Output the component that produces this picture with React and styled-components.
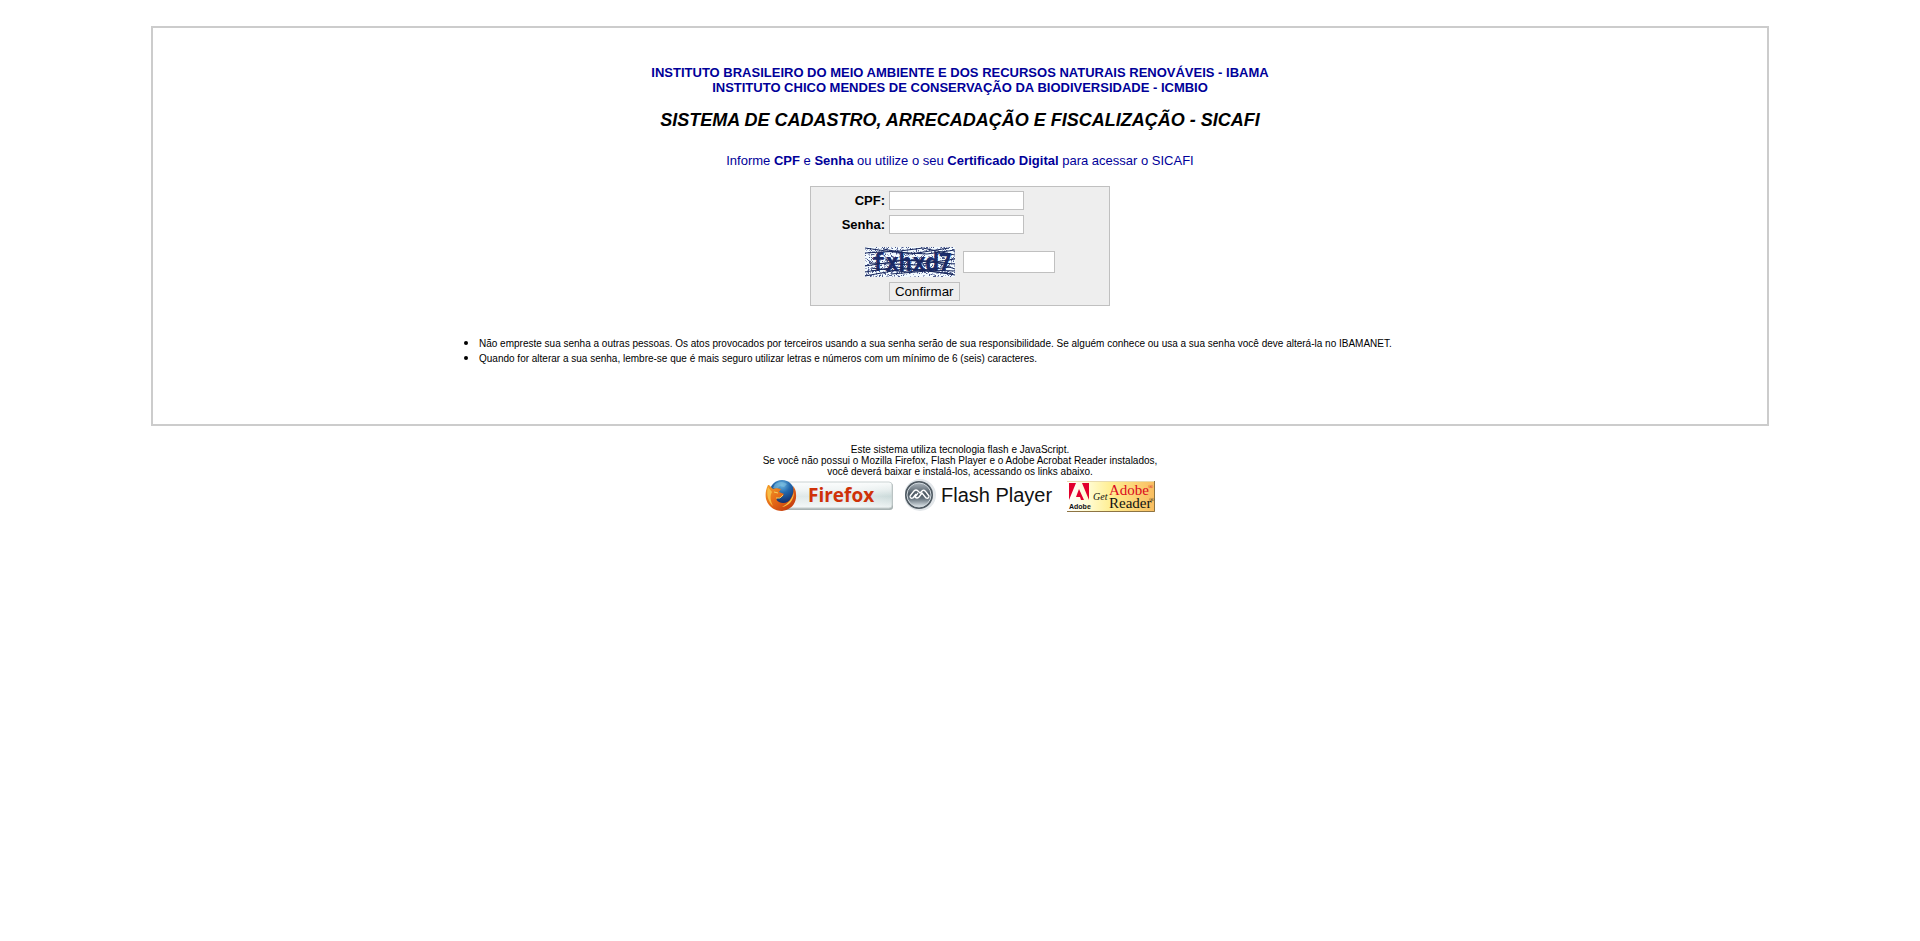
import React from "react";
import styled, { createGlobalStyle } from "styled-components";

const GlobalStyle = createGlobalStyle`
  body {
    margin: 0;
    background: #fff;
    color: #000;
    font-family: "Liberation Sans", Arial, Helvetica, sans-serif;
    font-size: 13px;
    line-height: 15px;
  }
`;

const Page = styled.div`
  padding: 26px 8px;
`;

const Panel = styled.main`
  box-sizing: border-box;
  width: 85%;
  margin: 0 auto;
  padding: 37px 0 59px;
  border: 2px solid #ccc;
  display: flex;
  flex-direction: column;
  align-items: center;
`;

const Agencies = styled.p`
  margin: 0;
  color: #009;
  font-weight: bold;
  text-align: center;
`;

const SystemTitle = styled.h1`
  margin: 15px 0 0;
  font-size: 18px;
  line-height: 20px;
  font-style: italic;
  text-align: center;
`;

const Intro = styled.p`
  margin: 23px 0 18px;
  color: #009;
  text-align: center;
`;

const LoginForm = styled.form`
  box-sizing: border-box;
  width: 300px;
  padding: 4px;
  border: 1px solid #c0c0c0;
  background: #eee;
  display: grid;
  grid-template-columns: 70px 1fr;
  gap: 5px 4px;
  align-items: center;
  justify-items: start;
`;

const FieldLabel = styled.label`
  justify-self: end;
  font-weight: bold;
`;

const TextInput = styled.input`
  box-sizing: border-box;
  width: ${(p) => (p.$code ? 92 : 135)}px;
  height: ${(p) => (p.$code ? 22 : 19)}px;
  padding: 1px 2px;
  border: 1px solid #c0c0c0;
  background: #fff;
  font: inherit;
`;

const CaptchaRow = styled.div`
  grid-column: 1 / -1;
  justify-self: center;
  margin-top: 8px;
  display: flex;
  align-items: center;
  gap: 8px;
`;

const Drawing = styled.svg`
  display: block;
`;

const SubmitButton = styled.button`
  grid-column: 2;
  box-sizing: border-box;
  height: 19px;
  padding: 0 5px;
  border: 1px solid #c0c0c0;
  background: #eee;
  color: #000;
  font-family: inherit;
`;

const Notes = styled.ul`
  box-sizing: border-box;
  width: 1042px;
  max-width: 100%;
  margin: 29px 0 0;
  padding: 0 0 0 40px;
`;

const NoteText = styled.span`
  font-size: 10px;
  line-height: 10px;
`;

const Requirements = styled.footer`
  margin-top: 18px;
  font-size: 10px;
  line-height: 11px;
  text-align: center;
`;

const RequirementsText = styled.p`
  margin: 0;
`;

const Downloads = styled.nav`
  margin-top: 2px;
  display: flex;
  justify-content: center;
  gap: 12px;
`;

const DownloadLink = styled.a`
  display: block;
  color: inherit;
  text-decoration: none;
`;

function specks(seed, count) {
  let s = seed;
  const next = () => {
    s = (s * 1103515245 + 12345) % 2147483648;
    return s / 2147483648;
  };
  let d = "";
  for (let i = 0; i < count; i += 1) {
    d += `M${Math.floor(next() * 90)} ${Math.floor(next() * 30)}h1v1h-1z`;
  }
  return d;
}

const LIGHT_SPECKS = specks(17, 620);
const DARK_SPECKS = specks(91, 420);

function Captcha() {
  return (
    <Drawing width="90" height="30" viewBox="0 0 90 30" role="img" aria-label="Código de segurança">
      <rect width="90" height="30" fill="#f2faff" />
      <g shapeRendering="crispEdges">
        <path d={LIGHT_SPECKS} fill="#a3acca" />
        <path d={DARK_SPECKS} fill="#4d5a8c" />
      </g>
      <text
        x="6 20 33 47 60 73"
        y="24"
        fontFamily="'DejaVu Sans Mono', monospace"
        fontWeight="bold"
        fontSize="24"
        fill="#1c2c6b"
      >
        fxhxd7
      </text>
      <g fill="none" stroke="#17265c" strokeWidth="1">
        <path d="M0 1L28 5L62 7L90 3M0 6L35 4L58 1L90 8M18 2L46 7L84 1" />
        <path d="M0 19L40 13L90 17M4 16L50 18L90 12M20 13L67 14L90 22" />
        <path d="M0 25L31 20L72 25L90 28M6 21L42 25L86 20M0 29L38 22L90 24M26 27L62 24L88 27" />
      </g>
    </Drawing>
  );
}

function FirefoxBadge() {
  return (
    <Drawing width="128" height="33" viewBox="0 -1 128 33" role="img" aria-label="Firefox">
      <defs>
        <linearGradient id="ffBar" x1="0" y1="0" x2="0" y2="1">
          <stop offset="0" stopColor="#fafcfc" />
          <stop offset=".3" stopColor="#e7eeee" />
          <stop offset=".55" stopColor="#cbdada" />
          <stop offset="1" stopColor="#eef3f3" />
        </linearGradient>
        <linearGradient id="ffBarFade">
          <stop offset="0" stopColor="#fff" stopOpacity=".4" />
          <stop offset=".7" stopColor="#fff" stopOpacity=".4" />
          <stop offset="1" stopColor="#fff" stopOpacity="0" />
        </linearGradient>
        <radialGradient id="ffGlobe" cx=".5" cy=".2" r=".8">
          <stop offset="0" stopColor="#6cb8e2" />
          <stop offset=".4" stopColor="#2469ad" />
          <stop offset="1" stopColor="#10225e" />
        </radialGradient>
        <linearGradient id="ffFox" x1="0" y1="0" x2="1" y2="1">
          <stop offset="0" stopColor="#f3a12b" />
          <stop offset=".45" stopColor="#e66a17" />
          <stop offset="1" stopColor="#b92d0b" />
        </linearGradient>
      </defs>
      <rect x="14" y="3" width="114" height="27" rx="3" fill="#a9b3b3" />
      <rect x="14" y="2" width="113" height="26" rx="3" fill="url(#ffBar)" stroke="#cbd3d3" />
      <rect x="15" y="3" width="111" height="24" rx="2" fill="url(#ffBarFade)" />
      <circle cx="17" cy="12.5" r="12.5" fill="url(#ffGlobe)" />
      <path d="M10 4Q16 0 22 4L19 7L15 6L12 9L8 8Z" fill="#7fbfe0" opacity=".6" />
      <path
        d="M3 5C1 9 0 14 1 19C3 26 9 31 17 31C26 30 32 23 31 14C31 11 30 8 28 6C29 11 28 15 26 18C24 23 18 24 14 22C11 21 11 18 13 18L17 17L19 14L14 12L16 9C12 8 10 8 8 9L4 5Z"
        fill="url(#ffFox)"
      />
      <path d="M29 12C29 20 24 26 17 27C24 23 27 19 29 12Z" fill="#f8c246" />
      <path d="M3 7C1 14 3 22 8 26C5 20 5 15 7 12Z" fill="#f8bd45" />
      <path d="M9 12L13 13M11 18L15 18L18 15" fill="none" stroke="#f6d05b" strokeWidth="1" />
      <text
        x="43"
        y="22"
        fontFamily="'Open Sans', sans-serif"
        fontWeight="bold"
        fontSize="19"
        fill="#cf3108"
      >
        Firefox
      </text>
    </Drawing>
  );
}

function FlashBadge() {
  return (
    <Drawing width="150" height="33" viewBox="0 0 150 33" role="img" aria-label="Flash Player">
      <defs>
        <linearGradient id="flBall" x1="0" y1="0" x2="0" y2="1">
          <stop offset="0" stopColor="#a9b3ba" />
          <stop offset=".45" stopColor="#4d5963" />
          <stop offset=".65" stopColor="#66737d" />
          <stop offset="1" stopColor="#dfe7eb" />
        </linearGradient>
      </defs>
      <circle cx="15" cy="16" r="16" fill="#e3e7ea" />
      <circle cx="14" cy="16" r="14" fill="#4f5a62" />
      <circle cx="14" cy="16" r="12" fill="url(#flBall)" stroke="#cfd7dc" strokeWidth="1" />
      <path
        d="M5 17L9 12Q11 10 13 12L15 14L17 12Q19 10 21 13L24 17Q24 20 21 19L17 14L14 18Q12 20 10 18L13 14M5 17Q5 20 8 19L11 15"
        fill="none"
        stroke="#fff"
        strokeWidth="1.3"
        strokeLinejoin="round"
      />
      <text x="36" y="23" fontFamily="'Liberation Sans', Arial, sans-serif" fontSize="20" fill="#111">
        Flash Player
      </text>
    </Drawing>
  );
}

function ReaderBadge() {
  return (
    <Drawing width="88" height="33" viewBox="0 -1 88 33" role="img" aria-label="Get Adobe Reader">
      <defs>
        <linearGradient id="rdBack">
          <stop offset="0" stopColor="#fff" />
          <stop offset=".25" stopColor="#fffbd0" />
          <stop offset=".5" stopColor="#ffee91" />
          <stop offset="1" stopColor="#f9bd60" />
        </linearGradient>
      </defs>
      <rect y="1" width="88" height="31" fill="url(#rdBack)" />
      <path d="M0 31.5H87.5V1" fill="none" stroke="#8d7443" />
      <path d="M0 1.5H87" stroke="#e8dbad" />
      <path d="M2 3H9L2 20ZM15 3H22V20ZM12 9L17 20H14L13 17H9Z" fill="#e2002c" />
      <text
        x="2"
        y="29"
        fontFamily="'Liberation Sans', Arial, sans-serif"
        fontWeight="bold"
        fontSize="7"
        fill="#111"
      >
        Adobe
      </text>
      <g fontFamily="'Liberation Serif', serif">
        <text x="26" y="20" fontStyle="italic" fontSize="10" fill="#111">
          Get
        </text>
        <text x="42" y="15" fontSize="15" fill="#d90b20">
          Adobe
        </text>
        <text x="42" y="28" fontSize="15" fill="#111">
          Reader
        </text>
        <text x="81" y="9" fontSize="7" fill="#d90b20">®</text>
        <text x="82" y="22" fontSize="7" fill="#111">®</text>
      </g>
    </Drawing>
  );
}

export default function App() {
  return (
    <>
      <GlobalStyle />
      <Page>
        <Panel>
          <Agencies>
            INSTITUTO BRASILEIRO DO MEIO AMBIENTE E DOS RECURSOS NATURAIS RENOVÁVEIS - IBAMA
            <br />
            INSTITUTO CHICO MENDES DE CONSERVAÇÃO DA BIODIVERSIDADE - ICMBIO
          </Agencies>
          <SystemTitle>SISTEMA DE CADASTRO, ARRECADAÇÃO E FISCALIZAÇÃO - SICAFI</SystemTitle>
          <Intro>
            Informe <b>CPF</b> e <b>Senha</b> ou utilize o seu <b>Certificado Digital</b> para acessar o SICAFI
          </Intro>
          <LoginForm onSubmit={(e) => e.preventDefault()}>
            <FieldLabel htmlFor="cpf">CPF:</FieldLabel>
            <TextInput id="cpf" type="text" />
            <FieldLabel htmlFor="senha">Senha:</FieldLabel>
            <TextInput id="senha" type="password" />
            <CaptchaRow>
              <Captcha />
              <TextInput $code type="text" aria-label="Código de segurança" />
            </CaptchaRow>
            <SubmitButton type="submit">Confirmar</SubmitButton>
          </LoginForm>
          <Notes>
            <li>
              <NoteText>
                Não empreste sua senha a outras pessoas. Os atos provocados por terceiros usando a sua senha serão de
                sua responsibilidade. Se alguém conhece ou usa a sua senha você deve alterá-la no IBAMANET.
              </NoteText>
            </li>
            <li>
              <NoteText>
                Quando for alterar a sua senha, lembre-se que é mais seguro utilizar letras e números com um mínimo de 6
                (seis) caracteres.
              </NoteText>
            </li>
          </Notes>
        </Panel>
        <Requirements>
          <RequirementsText>
            Este sistema utiliza tecnologia flash e JavaScript.
            <br />
            Se você não possui o Mozilla Firefox, Flash Player e o Adobe Acrobat Reader instalados,
            <br />
            você deverá baixar e instalá-los, acessando os links abaixo.
          </RequirementsText>
          <Downloads>
            <DownloadLink href="#firefox">
              <FirefoxBadge />
            </DownloadLink>
            <DownloadLink href="#flash">
              <FlashBadge />
            </DownloadLink>
            <DownloadLink href="#reader">
              <ReaderBadge />
            </DownloadLink>
          </Downloads>
        </Requirements>
      </Page>
    </>
  );
}
